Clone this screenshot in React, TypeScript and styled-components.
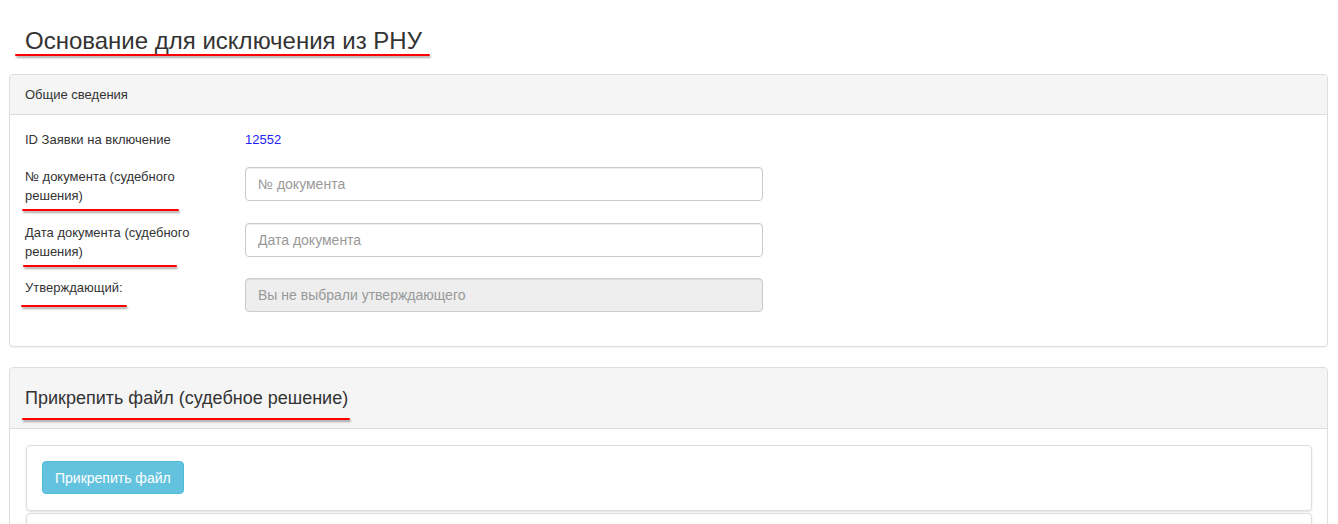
import styled, { createGlobalStyle } from "styled-components";

const GlobalStyle = createGlobalStyle`
  html, body {
    margin: 0;
    padding: 0;
    background: #fff;
  }
  body {
    font-family: "Liberation Sans", Arial, sans-serif;
    color: #333;
  }
  * { box-sizing: border-box; }
`;

const PageWrapper = styled.div`
  padding: 0 10px 0 9px;
`;

const Title = styled.h3`
  position: relative;
  margin: 0;
  padding: 27px 16px 0;
  height: 74px;
  font-size: 24px;
  font-weight: 400;
  line-height: 28px;
  color: #333;
`;

// hand-drawn red underline annotations on top of the screenshot
const Scribble = styled.span<{ $left: number; $top: number; $width: number }>`
  position: absolute;
  left: ${(p) => p.$left}px;
  top: ${(p) => p.$top}px;
  width: ${(p) => p.$width}px;
  height: 2px;
  background: #f00;
  border-radius: 1px;
  box-shadow: 1px 2px 2px rgba(0, 0, 0, 0.35);
  pointer-events: none;
`;

const Panel = styled.div`
  border: 1px solid #ddd;
  border-radius: 4px;
  background: #fff;
  margin-bottom: 20px;
  box-shadow: 0 1px 1px rgba(0, 0, 0, 0.05);
`;

const PanelHeading = styled.div<{ $big?: boolean }>`
  position: relative;
  background: #f5f5f5;
  border-bottom: 1px solid #ddd;
  border-radius: 3px 3px 0 0;
  padding: ${(p) => (p.$big ? "19px 15px" : "10px 15px")};
  font-size: ${(p) => (p.$big ? "18px" : "13px")};
  line-height: ${(p) => (p.$big ? "22px" : "19px")};
  color: #333;
`;

const PanelBody = styled.div<{ $pad?: string }>`
  padding: ${(p) => p.$pad || "15px"};
`;

const FormRow = styled.div<{ $height: number }>`
  display: flex;
  align-items: flex-start;
  height: ${(p) => p.$height}px;
`;

const Label = styled.div`
  position: relative;
  width: 220px;
  flex-shrink: 0;
  font-size: 13px;
  line-height: 19px;
  color: #333;
  padding-right: 30px;
`;

const Value = styled.div`
  font-size: 13px;
  line-height: 19px;
  color: #2323f5;
`;

const Input = styled.input`
  width: 518px;
  height: 34px;
  padding: 6px 12px;
  font-family: "Liberation Sans", Arial, sans-serif;
  font-size: 14px;
  color: #555;
  background: #fff;
  border: 1px solid #ccc;
  border-radius: 4px;
  box-shadow: inset 0 1px 1px rgba(0, 0, 0, 0.075);
  outline: none;

  &::placeholder {
    color: #999;
  }

  &:disabled {
    background: #eee;
  }
`;

const Well = styled.div<{ $minHeight?: number }>`
  border: 1px solid #ddd;
  border-radius: 4px;
  box-shadow: 0 1px 2px rgba(0, 0, 0, 0.12);
  padding: 15px 15px 16px;
  margin-bottom: 2px;
  min-height: ${(p) => p.$minHeight || 0}px;
`;

const Button = styled.button`
  height: 33px;
  padding: 6px 12px;
  font-family: "Liberation Sans", Arial, sans-serif;
  font-size: 14px;
  color: #fff;
  background: #5bc0de;
  border: 1px solid #46b8da;
  border-radius: 4px;
  opacity: 0.95;
  cursor: pointer;
`;

const App = () => {
  return (
    <>
      <GlobalStyle />
      <PageWrapper>
        <Title>
          Основание для исключения из РНУ
          <Scribble $left={6} $top={54} $width={415} />
        </Title>

        <Panel>
          <PanelHeading>Общие сведения</PanelHeading>
          <PanelBody $pad="15px 15px 34px">
            <FormRow $height={37}>
              <Label>ID Заявки на включение</Label>
              <Value>12552</Value>
            </FormRow>
            <FormRow $height={56}>
              <Label>
                № документа (судебного решения)
                <Scribble $left={-3} $top={42} $width={157} />
              </Label>
              <Input placeholder="№ документа" />
            </FormRow>
            <FormRow $height={55}>
              <Label>
                Дата документа (судебного решения)
                <Scribble $left={-2} $top={42} $width={154} />
              </Label>
              <Input placeholder="Дата документа" />
            </FormRow>
            <FormRow $height={34}>
              <Label>
                Утверждающий:
                <Scribble $left={-4} $top={27} $width={106} />
              </Label>
              <Input placeholder="Вы не выбрали утверждающего" disabled />
            </FormRow>
          </PanelBody>
        </Panel>

        <Panel>
          <PanelHeading $big>
            Прикрепить файл (судебное решение)
            <Scribble $left={12} $top={50} $width={328} />
          </PanelHeading>
          <PanelBody $pad="16px 15px 15px 16px">
            <Well>
              <Button>Прикрепить файл</Button>
            </Well>
            <Well $minHeight={60} />
          </PanelBody>
        </Panel>
      </PageWrapper>
    </>
  );
};

export default App;
